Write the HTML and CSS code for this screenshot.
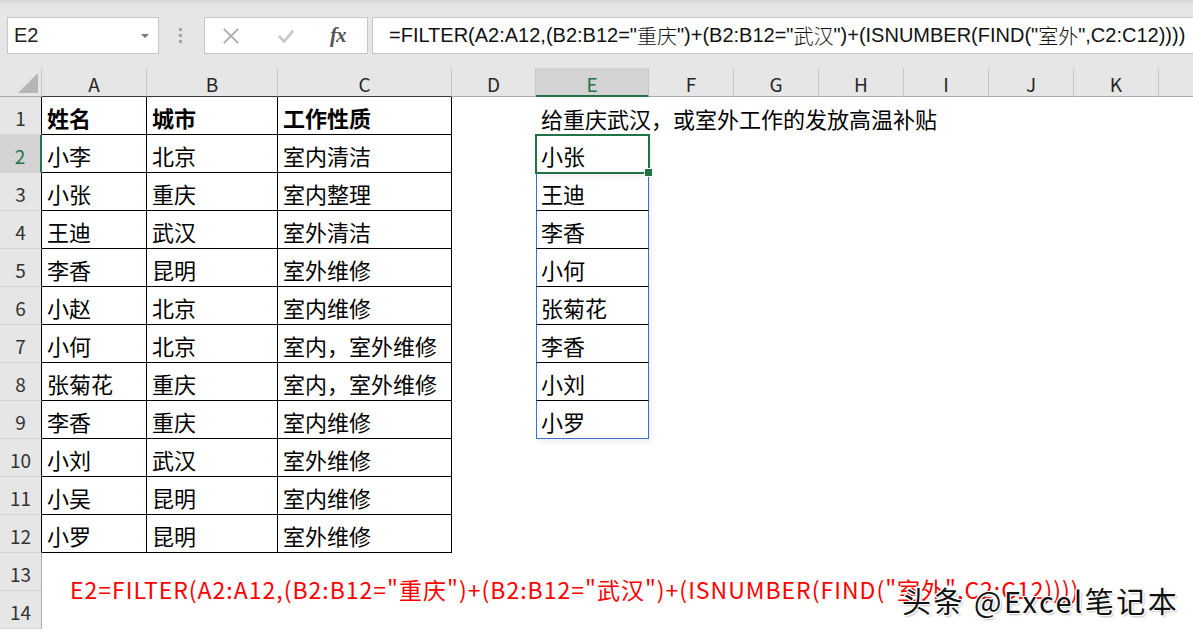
FILE: index.html
```html
<!DOCTYPE html>
<html lang="zh-CN">
<head>
<meta charset="utf-8">
<title>FILTER</title>
<link rel="stylesheet" href="styles.css">
</head>
<body>
<div class="app">
  <div class="toolbar">
    <div class="namebox"><span class="ref">E2</span><span class="caret"></span></div>
    <div class="grip"><i></i><i></i><i></i></div>
    <div class="fxbox">
      <svg class="ico" width="20" height="20" viewBox="0 0 20 20"><path d="M2 2 L18 18 M18 2 L2 18" stroke="#ababab" stroke-width="2" fill="none"/></svg>
      <svg class="ico" width="20" height="20" viewBox="0 0 20 20"><path d="M2 10 L8 16 L18 4" stroke="#c9c9c9" stroke-width="3" fill="none"/></svg>
      <span class="fx">fx</span>
    </div>
    <div class="formula">=FILTER(A2:A12,(B2:B12="<span class="cjk">重庆</span>")+(B2:B12="<span class="cjk">武汉</span>")+(ISNUMBER(FIND("<span class="cjk">室外</span>",C2:C12))))</div>
  </div>

  <div class="sheet">
    <div class="corner"><svg width="20" height="20" viewBox="0 0 20 20"><path d="M20 0 L20 20 L0 20 Z" fill="#b5b5b5"/></svg></div>
    <div class="ch tb">A</div>
    <div class="ch tb">B</div>
    <div class="ch tb">C</div>
    <div class="ch">D</div>
    <div class="ch on">E</div>
    <div class="ch">F</div>
    <div class="ch">G</div>
    <div class="ch">H</div>
    <div class="ch">I</div>
    <div class="ch">J</div>
    <div class="ch">K</div>
    <div class="ch last"></div>

    <div class="rh tb">1</div>
    <div class="c t b">姓名</div><div class="c t b">城市</div><div class="c t b">工作性质</div><div class="c"></div>
    <div class="c title">给重庆武汉，或室外工作的发放高温补贴</div>

    <div class="rh tb on">2</div>
    <div class="c t">小李</div><div class="c t">北京</div><div class="c t">室内清洁</div><div class="c"></div>
    <div class="c sp sel">小张</div>

    <div class="rh tb">3</div>
    <div class="c t">小张</div><div class="c t">重庆</div><div class="c t">室内整理</div><div class="c"></div>
    <div class="c sp">王迪</div>

    <div class="rh tb">4</div>
    <div class="c t">王迪</div><div class="c t">武汉</div><div class="c t">室外清洁</div><div class="c"></div>
    <div class="c sp">李香</div>

    <div class="rh tb">5</div>
    <div class="c t">李香</div><div class="c t">昆明</div><div class="c t">室外维修</div><div class="c"></div>
    <div class="c sp">小何</div>

    <div class="rh tb">6</div>
    <div class="c t">小赵</div><div class="c t">北京</div><div class="c t">室内维修</div><div class="c"></div>
    <div class="c sp">张菊花</div>

    <div class="rh tb">7</div>
    <div class="c t">小何</div><div class="c t">北京</div><div class="c t">室内，室外维修</div><div class="c"></div>
    <div class="c sp">李香</div>

    <div class="rh tb">8</div>
    <div class="c t">张菊花</div><div class="c t">重庆</div><div class="c t">室内，室外维修</div><div class="c"></div>
    <div class="c sp">小刘</div>

    <div class="rh tb">9</div>
    <div class="c t">李香</div><div class="c t">重庆</div><div class="c t">室内维修</div><div class="c"></div>
    <div class="c sp end">小罗</div>

    <div class="rh tb">10</div>
    <div class="c t">小刘</div><div class="c t">武汉</div><div class="c t">室外维修</div>

    <div class="rh tb">11</div>
    <div class="c t">小吴</div><div class="c t">昆明</div><div class="c t">室内维修</div>

    <div class="rh tb">12</div>
    <div class="c t">小罗</div><div class="c t">昆明</div><div class="c t">室外维修</div>

    <div class="rh">13</div>
    <div class="note">E2=FILTER(A2:A12,(B2:B12="重庆")+(B2:B12="武汉")+(ISNUMBER(FIND("室外",C2:C12))))</div>
    <div class="rh">14</div>
  </div>

  <div class="watermark">头条 @Excel笔记本</div>
</div>
</body>
</html>
```
FILE: styles.css
```css
* { box-sizing: border-box; }
html, body { margin: 0; padding: 0; background: #fff; }
body { overflow: hidden; width: 1193px; height: 632px; }

.app {
  position: relative;
  width: 1193px;
  height: 632px;
  overflow: hidden;
  font-family: "Noto Sans CJK SC", "Noto Sans", sans-serif;
}

/* ---------- toolbar ---------- */
.toolbar {
  height: 68px;
  display: flex;
  align-items: flex-start;
  padding-top: 17px;
  background: linear-gradient(#d6d6d6 0, #e6e6e6 6px, #e6e6e6 100%);
}
.namebox {
  margin-left: 7px;
  width: 152px;
  height: 37px;
  background: #fff;
  border: 1px solid #c6c6c6;
  display: flex;
  align-items: center;
  justify-content: space-between;
  padding: 0 9px 0 6px;
}
.ref {
  font-family: "Liberation Sans", Arial, sans-serif;
  font-size: 20px;
  color: #222;
}
.caret {
  width: 0; height: 0;
  border-left: 4px solid transparent;
  border-right: 4px solid transparent;
  border-top: 4px solid #777;
}
.grip {
  margin-left: 20px;
  width: 3px;
  height: 37px;
  display: flex;
  flex-direction: column;
  justify-content: center;
  gap: 3px;
}
.grip i { display: block; width: 3px; height: 3px; background: #a6a6a6; }
.fxbox {
  margin-left: 22px;
  width: 164px;
  height: 37px;
  background: #fff;
  border: 1px solid #c6c6c6;
  display: flex;
  align-items: center;
  padding-left: 17px;
}
.ico { display: block; width: 18px; height: 18px; }
.ico + .ico { margin-left: 37px; }
.fx {
  margin-left: 35px;
  font-family: "Liberation Serif", serif;
  font-style: italic;
  font-weight: bold;
  font-size: 21px;
  color: #555;
  letter-spacing: -1px;
}
.formula {
  margin-left: 4px;
  flex: 1;
  height: 37px;
  background: #fff;
  border: 1px solid #c6c6c6;
  border-right: none;
  display: flex;
  align-items: center;
  padding-left: 16px;
  font-family: "Liberation Sans", Arial, sans-serif;
  font-size: 20px;
  color: #111;
  white-space: nowrap;
}
.formula .cjk { font-family: "Noto Sans CJK SC", sans-serif; font-weight: 300; }

/* ---------- sheet ---------- */
.sheet {
  display: grid;
  grid-template-columns: 42px 105px 131px 174px 84px 113px 85px 85px 85px 85px 85px 85px 1fr;
  grid-template-rows: 29px repeat(14, 38px);
}
.corner {
  background: #e6e6e6;
  border-right: 1px solid #c6c6c6;
  border-bottom: 1px solid #ababab;
  display: flex;
  align-items: flex-end;
  justify-content: flex-end;
  padding: 0 3px 3px 0;
}
.corner svg { display: block; }
.ch {
  background: #e6e6e6;
  border-right: 1px solid #c6c6c6;
  border-bottom: 1px solid #ababab;
  display: flex;
  align-items: center;
  justify-content: center;
  padding-top: 3px;
  font-size: 19px;
  color: #262626;
}
.ch.tb { border-bottom-color: #3a3a3a; }
.ch.last { border-right: none; }
.ch.on {
  background: #d3d3d3;
  color: #217346;
  border-bottom: 2px solid #217346;
}
.rh {
  grid-column: 1;
  background: #e6e6e6;
  border-right: 1px solid #ababab;
  border-bottom: 1px solid #d4d4d4;
  display: flex;
  align-items: center;
  justify-content: center;
  padding-top: 4px;
  font-size: 19px;
  color: #333;
}
.rh.tb { border-right-color: #000; }
.rh.on {
  background: #d3d3d3;
  color: #217346;
  border-right: 2px solid #217346;
}

.c {
  display: flex;
  align-items: center;
  padding: 3px 0 0 5px;
  font-size: 22px;
  color: #000;
  white-space: nowrap;
}
.c.t {
  border-right: 1px solid #000;
  border-bottom: 1px solid #000;
}
.c.b { font-weight: bold; }
.c.title { overflow: visible; }

.c.sp {
  background: #fff;
  border-left: 1px solid #3572d4;
  border-right: 1px solid #3572d4;
  border-bottom: 1px solid #000;
  padding-left: 4px;
  box-shadow: 2px 3px 6px rgba(0, 0, 0, 0.08);
}
.c.sp.end { border-bottom-color: #3572d4; }
.c.sel {
  position: relative;
  z-index: 2;
  outline: 2px solid #217346;
  outline-offset: -1px;
}
.c.sel::after {
  content: "";
  position: absolute;
  right: -5px;
  bottom: -5px;
  width: 7px;
  height: 7px;
  background: #217346;
  border: 1px solid #fff;
}

.note {
  grid-column: 2 / -1;
  grid-row: span 2;
  display: flex;
  align-items: center;
  padding-left: 28px;
  padding-bottom: 4px;
  font-size: 23px;
  letter-spacing: 1px;
  color: #ff0000;
  white-space: nowrap;
}

.watermark {
  position: absolute;
  left: 902px;
  top: 582px;
  font-size: 29px;
  letter-spacing: 2.5px;
  line-height: 36px;
  color: #111;
  white-space: nowrap;
  text-shadow:
    1px 0 0 #fff, -1px 0 0 #fff, 0 1px 0 #fff, 0 -1px 0 #fff,
    1px 1px 0 #fff, -1px -1px 0 #fff, 1px -1px 0 #fff, -1px 1px 0 #fff,
    2px 2px 2px rgba(0,0,0,0.25);
}
```
